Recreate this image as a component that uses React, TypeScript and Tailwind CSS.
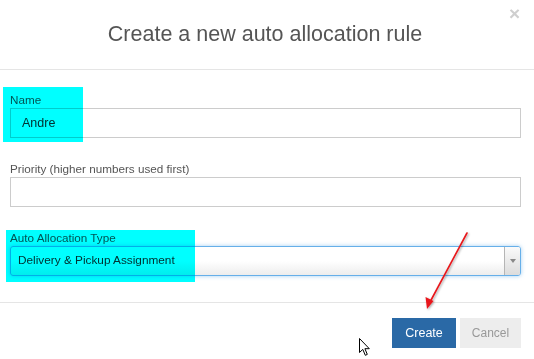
import React from 'react';

function Field({ label, children }: { label: string; children: React.ReactNode }) {
  return (
    <div className="flex flex-col">
      <label className="text-[11.7px] leading-[16px] text-[#555]">{label}</label>
      {children}
    </div>
  );
}

export default function App() {
  return (
    <div className="relative w-[534px] h-[359px] overflow-hidden bg-white font-['Liberation_Sans',Arial,sans-serif]">
      {/* Header */}
      <div className="relative h-[70px] border-b border-[#e5e5e5] pt-[22px]">
        <h4 className="pr-[4px] text-center text-[21.5px] leading-[24px] text-[#555]">
          Create a new auto allocation rule
        </h4>
        <button className="absolute right-[14px] top-[2px] text-[19px] font-bold leading-[24px] text-[#cfcfcf]">
          ×
        </button>
      </div>

      {/* Body */}
      <div className="flex flex-col gap-[23px] pl-[10px] pr-[13px] pt-[22px]">
        <Field label="Name">
          <div className="flex h-[30px] items-center border border-[#ccc] px-[11px] text-[12.5px] text-[#333]">
            Andre
          </div>
        </Field>
        <Field label="Priority (higher numbers used first)">
          <div className="h-[30px] border border-[#ccc]" />
        </Field>
        <Field label="Auto Allocation Type">
          <div className="flex h-[30px] items-stretch overflow-hidden rounded-[3px] border border-[#66afe9] bg-gradient-to-b from-white via-white to-[#ededed] shadow-[0_0_4px_rgba(102,175,233,0.6)]">
            <div className="flex flex-1 items-center pl-[7px] text-[11.8px] text-[#333]">
              Delivery &amp; Pickup Assignment
            </div>
            <div className="flex w-[16px] items-center justify-center border-l border-[#b5b5b5] bg-gradient-to-b from-[#fafafa] to-[#dcdcdc]">
              <div className="h-0 w-0 border-x-[3px] border-t-[4px] border-x-transparent border-t-[#888]" />
            </div>
          </div>
        </Field>
      </div>

      {/* Footer */}
      <div className="mt-[26px] flex justify-end gap-[4px] border-t border-[#e5e5e5] pr-[13px] pt-[15px]">
        <button className="h-[30px] w-[64px] bg-[#2a69a6] text-[12.5px] text-white">Create</button>
        <button className="h-[30px] w-[61px] bg-[#ededed] text-[12px] text-[#999]">Cancel</button>
      </div>

      {/* Highlighter marks */}
      <div className="pointer-events-none absolute left-[3px] top-[87px] h-[55px] w-[80px] bg-[#00ffff] mix-blend-multiply" />
      <div className="pointer-events-none absolute left-[6px] top-[230px] h-[52px] w-[189px] bg-[#00ffff] mix-blend-multiply" />

      {/* Red arrow annotation */}
      <svg className="pointer-events-none absolute left-0 top-0" width="534" height="359">
        <defs>
          <filter id="sh" x="-20%" y="-20%" width="140%" height="140%">
            <feDropShadow dx="1" dy="1" stdDeviation="1" floodColor="#000" floodOpacity="0.35" />
          </filter>
        </defs>
        <g filter="url(#sh)">
          <line x1="467" y1="233" x2="430" y2="302" stroke="#e8191b" strokeWidth="1.6" strokeLinecap="round" />
          <polygon points="427,309 425.5,297 433.5,301" fill="#e8191b" />
        </g>
      </svg>

      {/* Mouse cursor */}
      <svg className="pointer-events-none absolute left-[358px] top-[337px]" width="14" height="21" viewBox="0 0 14 21">
        <path d="M1.5 1.5 L1.5 15.5 L4.8 12.4 L7.3 18.3 L9.3 17.4 L6.9 11.7 L11.3 11.7 Z" fill="#fff" stroke="#000" strokeWidth="1" strokeLinejoin="miter" />
      </svg>
    </div>
  );
}
